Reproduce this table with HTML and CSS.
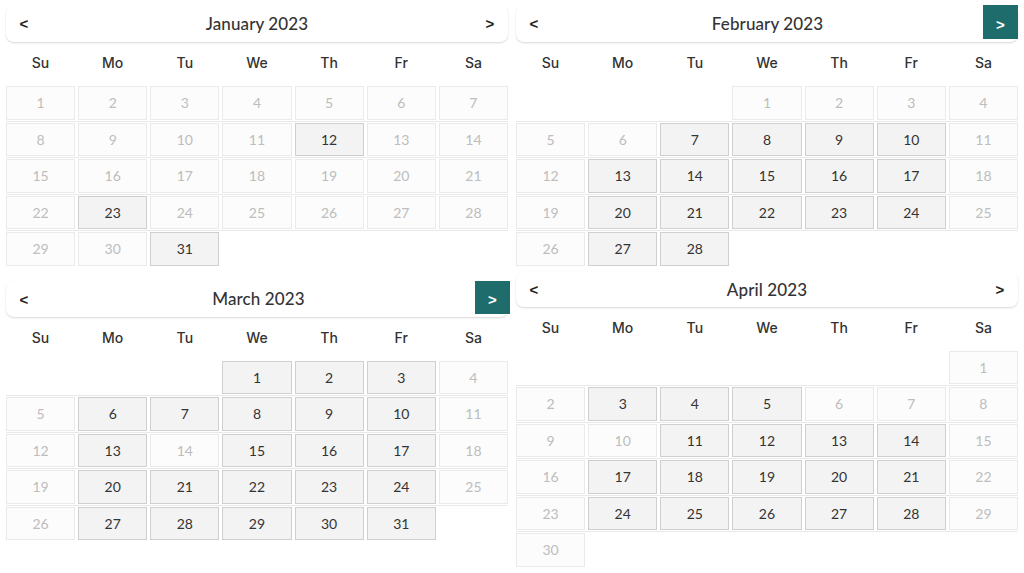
FILE: index.html
```html
<!DOCTYPE html>
<html>
<head>
<meta charset="utf-8">
<link rel="stylesheet" href="styles.css">
</head>
<body>
<div class="board">
  <div class="col">
    <section class="cal">
      <header class="head"><span class="nav">&lt;</span><span class="title">January 2023</span><span class="nav">&gt;</span></header>
      <div class="wk"><span>Su</span><span>Mo</span><span>Tu</span><span>We</span><span>Th</span><span>Fr</span><span>Sa</span></div>
      <div class="row"><span class="d off">1</span><span class="d off">2</span><span class="d off">3</span><span class="d off">4</span><span class="d off">5</span><span class="d off">6</span><span class="d off">7</span></div>
      <div class="row"><span class="d off">8</span><span class="d off">9</span><span class="d off">10</span><span class="d off">11</span><span class="d on">12</span><span class="d off">13</span><span class="d off">14</span></div>
      <div class="row"><span class="d off">15</span><span class="d off">16</span><span class="d off">17</span><span class="d off">18</span><span class="d off">19</span><span class="d off">20</span><span class="d off">21</span></div>
      <div class="row"><span class="d off">22</span><span class="d on">23</span><span class="d off">24</span><span class="d off">25</span><span class="d off">26</span><span class="d off">27</span><span class="d off">28</span></div>
      <div class="row last"><span class="d off">29</span><span class="d off">30</span><span class="d on">31</span><span></span><span></span><span></span><span></span></div>
    </section>
    <section class="cal cal-mar">
      <header class="head"><span class="nav">&lt;</span><span class="title">March 2023</span><span class="nav btn">&gt;</span></header>
      <div class="wk"><span>Su</span><span>Mo</span><span>Tu</span><span>We</span><span>Th</span><span>Fr</span><span>Sa</span></div>
      <div class="row"><span></span><span></span><span></span><span class="d on">1</span><span class="d on">2</span><span class="d on">3</span><span class="d off">4</span></div>
      <div class="row"><span class="d off">5</span><span class="d on">6</span><span class="d on">7</span><span class="d on">8</span><span class="d on">9</span><span class="d on">10</span><span class="d off">11</span></div>
      <div class="row"><span class="d off">12</span><span class="d on">13</span><span class="d off">14</span><span class="d on">15</span><span class="d on">16</span><span class="d on">17</span><span class="d off">18</span></div>
      <div class="row"><span class="d off">19</span><span class="d on">20</span><span class="d on">21</span><span class="d on">22</span><span class="d on">23</span><span class="d on">24</span><span class="d off">25</span></div>
      <div class="row last"><span class="d off">26</span><span class="d on">27</span><span class="d on">28</span><span class="d on">29</span><span class="d on">30</span><span class="d on">31</span><span></span></div>
    </section>
  </div>
  <div class="col col-right">
    <section class="cal">
      <header class="head"><span class="nav">&lt;</span><span class="title">February 2023</span><span class="nav btn">&gt;</span></header>
      <div class="wk"><span>Su</span><span>Mo</span><span>Tu</span><span>We</span><span>Th</span><span>Fr</span><span>Sa</span></div>
      <div class="row"><span></span><span></span><span></span><span class="d off">1</span><span class="d off">2</span><span class="d off">3</span><span class="d off">4</span></div>
      <div class="row"><span class="d off">5</span><span class="d off">6</span><span class="d on">7</span><span class="d on">8</span><span class="d on">9</span><span class="d on">10</span><span class="d off">11</span></div>
      <div class="row"><span class="d off">12</span><span class="d on">13</span><span class="d on">14</span><span class="d on">15</span><span class="d on">16</span><span class="d on">17</span><span class="d off">18</span></div>
      <div class="row"><span class="d off">19</span><span class="d on">20</span><span class="d on">21</span><span class="d on">22</span><span class="d on">23</span><span class="d on">24</span><span class="d off">25</span></div>
      <div class="row last"><span class="d off">26</span><span class="d on">27</span><span class="d on">28</span><span></span><span></span><span></span><span></span></div>
    </section>
    <section class="cal cal-apr">
      <header class="head head-sm"><span class="nav">&lt;</span><span class="title">April 2023</span><span class="nav">&gt;</span></header>
      <div class="wk"><span>Su</span><span>Mo</span><span>Tu</span><span>We</span><span>Th</span><span>Fr</span><span>Sa</span></div>
      <div class="row"><span></span><span></span><span></span><span></span><span></span><span></span><span class="d off">1</span></div>
      <div class="row"><span class="d off">2</span><span class="d on">3</span><span class="d on">4</span><span class="d on">5</span><span class="d off">6</span><span class="d off">7</span><span class="d off">8</span></div>
      <div class="row"><span class="d off">9</span><span class="d off">10</span><span class="d on">11</span><span class="d on">12</span><span class="d on">13</span><span class="d on">14</span><span class="d off">15</span></div>
      <div class="row"><span class="d off">16</span><span class="d on">17</span><span class="d on">18</span><span class="d on">19</span><span class="d on">20</span><span class="d on">21</span><span class="d off">22</span></div>
      <div class="row"><span class="d off">23</span><span class="d on">24</span><span class="d on">25</span><span class="d on">26</span><span class="d on">27</span><span class="d on">28</span><span class="d off">29</span></div>
      <div class="row last"><span class="d off">30</span><span></span><span></span><span></span><span></span><span></span><span></span></div>
    </section>
  </div>
</div>
</body>
</html>
```

FILE: styles.css
```css
* { box-sizing: border-box; }
html, body { margin: 0; padding: 0; background: #fff; }
body {
  font-family: Lato, "Noto Sans", sans-serif;
  color: #333;
  width: 1024px;
  height: 573px;
  overflow: hidden;
}
.board {
  display: flex;
  gap: 8px;
  padding: 5px 6px 0 6px;
}
.col {
  width: 502px;
  display: flex;
  flex-direction: column;
}
.col-right { width: 502px; }
.cal { display: flex; flex-direction: column; }
.cal-mar { margin-top: 12px; }
.cal-apr { margin-top: 3px; }

.head {
  height: 37px;
  display: flex;
  align-items: center;
  justify-content: space-between;
  border-radius: 8px;
  box-shadow: 0 1px 2px rgba(0,0,0,0.16);
  background: #fff;
}
.cal-mar .head { height: 36px; }
.head-sm { height: 35px; }
.nav {
  width: 34px;
  height: 34px;
  display: flex;
  align-items: center;
  justify-content: center;
  font-family: "Liberation Sans", Arial, sans-serif;
  font-weight: bold;
  font-size: 15px;
  color: #222;
  margin: 0 1px;
  align-self: flex-start;
  padding-top: 3px;
}
.head-sm .nav { height: 35px; padding-top: 0; }
.nav.btn {
  background: #1e6d6c;
  color: #fff;
  margin: 0;
  height: 34px;
  width: 35px;
  padding-top: 4px;
}
.cal-mar .nav.btn { height: 33px; margin-right: -2px; }
.title {
  font-size: 17px;
  font-weight: 500;
  color: #333;
  letter-spacing: 0.1px;
}

.wk {
  display: grid;
  grid-template-columns: repeat(7, 1fr);
  gap: 3px;
  height: 44px;
  align-items: center;
  text-align: center;
  font-family: Inter, "Liberation Sans", sans-serif;
  font-size: 14px;
  font-weight: 500;
  color: #333;
  padding-bottom: 3px;
}
.row {
  display: grid;
  grid-template-columns: repeat(7, 1fr);
  gap: 3px;
  padding-bottom: 1px;
  border-bottom: 1px solid #e9e9e9;
  margin-bottom: 1px;
}
.row.last { border-bottom-color: transparent; }
.row > span { height: 33.5px; }
.d {
  display: flex;
  align-items: center;
  justify-content: center;
  font-size: 14px;
  border: 1px solid #eaeaea;
  background: #fcfcfc;
  color: #bdbdbd;
}
.d.on {
  border-color: #cfcfcf;
  background: #f3f3f3;
  color: #333;
}
```
